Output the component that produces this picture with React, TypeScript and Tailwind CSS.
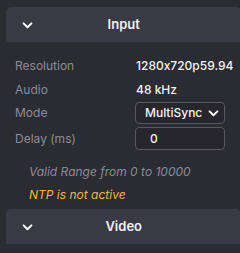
import React from 'react';

const Chevron: React.FC<{ className?: string }> = ({ className }) => (
    <svg viewBox="0 0 12 8" className={className} fill="none" stroke="currentColor" strokeWidth="2.2" strokeLinecap="round" strokeLinejoin="round">
        <path d="M1.5 1.5 L6 6 L10.5 1.5" />
    </svg>
);

const SectionHeader: React.FC<{ title: string }> = ({ title }) => (
    <div className="relative h-[35px] flex items-center justify-center bg-[#3a3a46] rounded-t-[5px]">
        <Chevron className="absolute left-[16px] top-[15px] w-[11px] h-[7px] text-white" />
        <span className="text-[13px] font-semibold text-[#f2f2f4]">{title}</span>
    </div>
);

const Row: React.FC<{ label: string; children: React.ReactNode; className?: string }> = ({ label, children, className }) => (
    <div className={`flex items-center ${className ?? ''}`}>
        <span className="w-[120px] text-[#8c8c96]">{label}</span>
        {children}
    </div>
);

export default function App() {
    return (
        <div className="w-[240px] h-[253px] flex bg-[#1c1c20] overflow-hidden [font-feature-settings:'calt'_0]" style={{ fontFamily: 'Inter, "Open Sans", sans-serif' }}>
            <div className="w-[2px]" />
            <div className="flex-1 bg-[#2b2b32] pl-[6px] pr-[2px] pt-[7px]">
                <SectionHeader title="Input" />
                <div className="pl-[9px] pr-[8px] pt-[11px] text-[12px] leading-none">
                    <Row label="Resolution" className="h-[25px]">
                        <span className="pl-[1px] font-medium text-[#f4f4f6]">1280x720p59.94</span>
                    </Row>
                    <Row label="Audio" className="h-[24px]">
                        <span className="pl-[1px] font-medium text-[#f4f4f6]">48 kHz</span>
                    </Row>
                    <Row label="Mode" className="h-[22px] mb-[3px]">
                        <div className="w-[90px] h-[22px] flex items-center justify-between pl-[9px] pr-[5px] border border-[#585862] rounded-[4px] bg-[#26262c] font-medium text-[#f4f4f6]">
                            <span>MultiSync</span>
                            <Chevron className="w-[11px] h-[7px] text-white" />
                        </div>
                    </Row>
                    <Row label="Delay (ms)" className="h-[23px]">
                        <div className="w-[90px] h-[23px] flex items-center pl-[14px] border border-[#585862] rounded-[4px] bg-[#26262c] font-medium text-[#f4f4f6]">
                            0
                        </div>
                    </Row>
                    <div className="pl-[14px] pt-[16px] italic">
                        <p className="h-[16px] text-[#8c8c96]">Valid Range from 0 to 10000</p>
                        <p className="h-[16px] mt-[7px] text-[#f5b82e]">NTP is not active</p>
                    </div>
                </div>
                <div className="mt-[4px]">
                    <SectionHeader title="Video" />
                </div>
            </div>
            <div className="w-[5px] border-l border-[#1a1a1e] bg-[#2a2a2f]" />
        </div>
    );
}
